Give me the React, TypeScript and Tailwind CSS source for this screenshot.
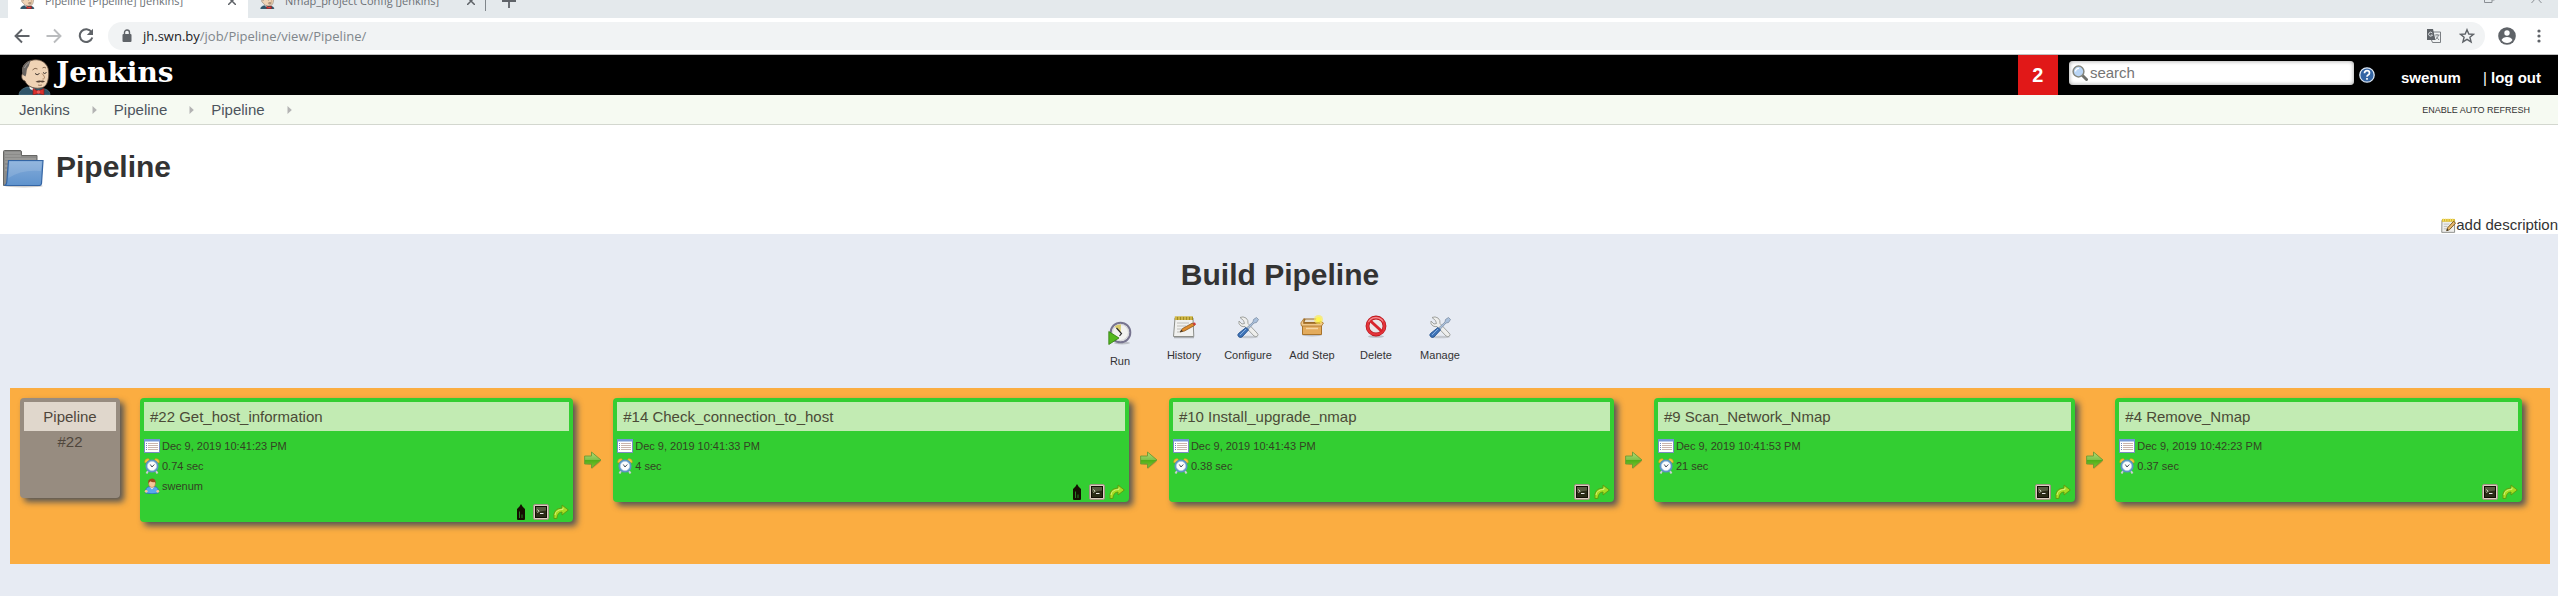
import React from "react";
import type { ReactNode } from "react";

type Build = {
  title: string;
  started: string;
  duration: string;
  user?: string;
  tag?: boolean;
  grow: string;
};

const builds: Build[] = [
  { title: "#22 Get_host_information", started: "Dec 9, 2019 10:41:23 PM", duration: "0.74 sec", user: "swenum", tag: true, grow: "grow-[433]" },
  { title: "#14 Check_connection_to_host", started: "Dec 9, 2019 10:41:33 PM", duration: "4 sec", tag: true, grow: "grow-[517]" },
  { title: "#10 Install_upgrade_nmap", started: "Dec 9, 2019 10:41:43 PM", duration: "0.38 sec", grow: "grow-[445]" },
  { title: "#9 Scan_Network_Nmap", started: "Dec 9, 2019 10:41:53 PM", duration: "21 sec", grow: "grow-[421]" },
  { title: "#4 Remove_Nmap", started: "Dec 9, 2019 10:42:23 PM", duration: "0.37 sec", grow: "grow-[406]" },
];

function Butler({ className }: { className: string }) {
  return (
    <svg viewBox="0 0 34 36" className={className} aria-hidden="true">
      <path d="M1 36C1 31.500 5 29.500 9 28L22 29C28 30 32 31 32 36Z" fill="#2f5468" stroke="#5d7f90" strokeWidth=".6" />
      <path d="M11 27L17 30L16 32L12 30Z" fill="#f4f4f4" />
      <path d="M5 14C3 8 7 3 13 1.500C21-1 28 3 30 9C31 13 31 17 30 21C29 26 26 29 22 29C15 30 9 27 7 22C3 21 3 16 5 14Z" fill="#efd3b5" stroke="#5a483a" strokeWidth=".8" />
      <path d="M4.500 15C3 8 6 3.500 13 1.500C11 4 12 6 9.500 9C8 12 9 14 7.500 17.500C5.500 16.500 5 16 4.500 15Z" fill="#6a6561" />
      <path d="M6.500 9C8 6 9 5 11 3.500" fill="none" stroke="#a5a19d" strokeWidth="1" />
      <path d="M14.500 11Q17 8 19.500 10M24.500 9Q26 7.500 28 9" fill="none" stroke="#7b5d46" strokeWidth=".9" />
      <path d="M17 14.500Q19 17 21.500 14.500M25 13.500Q26.500 15.500 28.500 13.500" fill="none" stroke="#3b322c" strokeWidth="1" />
      <path d="M24 14.500C27 17.500 27.500 20 24.500 20" fill="none" stroke="#a37c5c" strokeWidth=".9" />
      <path d="M17.500 22.800Q21 20.800 23 21.800Q25 21 27 22.500Q24.500 24 22.500 23Q20 24.300 17.500 22.800Z" fill="#5a4537" />
      <path d="M20 26Q22 26.800 24 26" fill="none" stroke="#8a6349" strokeWidth=".8" />
      <path d="M15 29.500L20 32L26 29.500V36L20.500 34.500L15 36Z" fill="#d8302d" stroke="#7c1715" strokeWidth=".6" />
      <circle cx="20.500" cy="33" r="1.700" fill="#ee5a57" />
    </svg>
  );
}

function FolderIcon() {
  return (
    <svg viewBox="0 0 44 40" className="h-10 w-11" aria-hidden="true">
      <defs>
        <linearGradient id="folderFront" x1="0" y1="0" x2="0" y2="1">
          <stop offset="0" stopColor="#85acd9" />
          <stop offset="1" stopColor="#5f93cd" />
        </linearGradient>
      </defs>
      <ellipse cx="24" cy="37" rx="19" ry="1.500" fill="#000" opacity=".2" />
      <path d="M3.500 36.500V2.500Q3.500 1.500 4.500 1.500H20Q21.500 1.500 21.500 3V6.500H37V34Z" fill="#8b8b89" stroke="#666664" />
      <path d="M5 4H20M5 7H21M5 10H36M5 13H10M5 17H8M5 21H7" stroke="#a8a8a6" />
      <path d="M8.500 11.500H43L41.500 34.500Q41.300 36.500 39.500 36.500H4.500Q6.500 36 6.800 33Z" fill="url(#folderFront)" stroke="#3465a4" strokeWidth="1.200" />
      <path d="M9.500 12.700H41.600L41 22Q22 20 8.500 29Z" fill="#fff" opacity=".13" />
    </svg>
  );
}

function NotepadIcon({ className }: { className: string }) {
  return (
    <svg viewBox="0 0 24 24" className={className} aria-hidden="true">
      <path d="M2 22.500H22" stroke="#000" opacity=".25" strokeWidth="1.500" />
      <path d="M3 3H21L21.800 21.500H1.500Z" fill="#f1f1ef" stroke="#8c8e89" />
      <path d="M2.800 1.500H21V5H2.800Z" fill="#a28c22" />
      <path d="M4 1V5M7 1V5M10 1V5M13 1V5M16 1V5M19 1V5" stroke="#e8cf5f" strokeWidth="1.200" />
      <path d="M5 8H17M5 11H14M5 14H10M5 17H9" stroke="#bdbdb9" />
      <path d="M8 17L10.500 13.500L20.500 8L22.500 10.500L12.500 16Z" fill="#e08c2c" stroke="#7b4a12" strokeWidth=".7" />
      <path d="M20.500 8L23 7.500L24 9.500L22.500 10.500Z" fill="#d13939" />
      <path d="M8 17L9.500 15L11 16.300Z" fill="#222" />
    </svg>
  );
}

function EditNoteIcon() {
  return (
    <svg viewBox="0 0 16 16" className="size-[15px]" aria-hidden="true">
      <path d="M1 2.500H14.500V15.300H.8Z" fill="#eeeeec" stroke="#7d7f7a" strokeWidth=".9" />
      <path d="M1 1H14.800V4H1Z" fill="#d9b92a" />
      <path d="M2.500 .5V3.500M5 .5V3.500M7.500 .5V3.500M10 .5V3.500M12.500 .5V3.500" stroke="#f8e889" strokeWidth=".9" />
      <path d="M3 6.500H9M3 9H7M3 11.500H6" stroke="#bdbdb9" />
      <path d="M6 13.500L7 10.500L13.500 3.500L15.500 5.500L9 12.500Z" fill="#e9b96e" stroke="#6b4a12" strokeWidth=".9" />
      <path d="M6 13.500L6.600 11.500L8 13Z" fill="#222" />
    </svg>
  );
}

function RunIcon() {
  return (
    <svg viewBox="0 0 24 24" className="size-6" aria-hidden="true">
      <ellipse cx="14" cy="22" rx="8" ry="1.500" opacity=".18" />
      <circle cx="12.500" cy="11.500" r="9.800" fill="#f2f2f0" stroke="#77748f" strokeWidth="2" />
      <circle cx="12.500" cy="11.500" r="8" fill="none" stroke="#c9c9cf" strokeWidth=".8" />
      <path d="M12.500 11.500L6.500 5.500Q9 3.500 13 3.600Z" fill="#d9cb6a" />
      <path d="M8.500 7L13.500 12.500L11.500 15" fill="none" stroke="#2a2a2a" strokeWidth="1.200" />
      <path d="M.8 10.500L11 17L.8 23.500Z" fill="#54b81f" stroke="#2f7d0c" strokeWidth=".8" />
    </svg>
  );
}

function ToolsIcon() {
  return (
    <svg viewBox="0 0 24 24" className="size-6" aria-hidden="true">
      <ellipse cx="12" cy="22" rx="10" ry="1.300" opacity=".15" />
      <path d="M4 2.500L7.500 5.500L8.500 8.500L6 9L3 6Q2 9 5 11Q7 12 9 11.500L18 21Q20 22.500 21.500 21Q22.800 19.500 21 18L12 8.500Q12.500 5 10 3Q7 1 4 2.500Z" fill="#eeeeec" stroke="#999b97" strokeWidth=".9" />
      <path d="M10.500 13L17 7L17.500 4.500L20.500 2.500L22.500 4.500L20.500 7.500L18 8L12 14.500Z" fill="#a9c0dc" stroke="#7e8ea3" strokeWidth=".8" />
      <path d="M10 12.500L12.500 15L6 22Q3.800 23 2.500 21.500Q1 20 2.500 18.500Z" fill="#3f74b8" stroke="#23508c" strokeWidth=".9" />
      <path d="M4 20L10 14" stroke="#8bb1df" strokeWidth="1" />
    </svg>
  );
}

function BoxIcon() {
  return (
    <svg viewBox="0 0 24 24" className="size-6" aria-hidden="true">
      <ellipse cx="12" cy="20" rx="10" ry="1.500" opacity=".18" />
      <path d="M4 3.500H19L22 9H2Z" fill="#9b6a29" />
      <path d="M5.500 4.500H18L19.500 7H4.500Z" fill="#e8e0d0" />
      <path d="M2.500 9.500H21.500V19.500H2.500Z" fill="#e3ab5c" stroke="#a8732b" />
      <path d="M4 3.500L.8 8L1.500 11H21.500L23.500 8L19 5.500L20 8.500H3.500Z" fill="#f0c88b" stroke="#a8732b" strokeWidth=".8" />
      <path d="M6 13.500H18" stroke="#f5d6a4" strokeWidth="1.500" />
      <circle cx="18.500" cy="4.500" r="4.500" fill="#fce94f" opacity=".65" />
      <circle cx="18.500" cy="4.500" r="2.500" fill="#fff64a" />
    </svg>
  );
}

function DeleteIcon() {
  return (
    <svg viewBox="0 0 24 24" className="size-6" aria-hidden="true">
      <ellipse cx="12" cy="21.500" rx="8" ry="1.300" opacity=".18" />
      <circle cx="12" cy="11" r="8.500" fill="#e9e5e8" stroke="#b31217" strokeWidth="3.800" />
      <circle cx="12" cy="11" r="8.500" fill="none" stroke="#e3333a" strokeWidth="2.500" />
      <path d="M6 5.500L18 16.500" stroke="#d8242b" strokeWidth="3" />
      <path d="M4.500 7A8.500 8.500 0 0 1 19 6.500" fill="none" stroke="#f08e92" strokeWidth="1.200" />
    </svg>
  );
}

function ListIcon() {
  return (
    <svg viewBox="0 0 16 16" className="size-4" aria-hidden="true">
      <path d="M.5 1.500H15.500V14.500H.5Z" fill="#fff" stroke="#7a8cc4" />
      <path d="M0 1H16V3.500H0Z" fill="#7397d6" />
      <path d="M4 5.500H14M4 7.500H14M4 9.500H14M4 11.500H14" stroke="#c9b5ad" />
      <path d="M2 5.500H3M2 7.500H3M2 9.500H3M2 11.500H3" stroke="#6c88c0" />
    </svg>
  );
}

function ClockIcon() {
  return (
    <svg viewBox="0 0 16 16" className="size-4" aria-hidden="true">
      <path d="M4 13L2.500 15.500M12 13L13.500 15.500" stroke="#c9cdd2" strokeWidth="2" />
      <path d="M.6 4.500Q.5 .8 4.500 .6L5.500 2L2 5Z" fill="#f5c43c" stroke="#b98a1c" strokeWidth=".5" />
      <path d="M15.400 4.500Q15.500 .8 11.500 .6L10.500 2L14 5Z" fill="#f5c43c" stroke="#b98a1c" strokeWidth=".5" />
      <circle cx="8" cy="8" r="5.600" fill="#fbfcfd" stroke="#5b93c4" strokeWidth="2" />
      <circle cx="8" cy="8" r="4.700" fill="none" stroke="#c6dbec" strokeWidth=".6" />
      <path d="M6.300 6.500L8 9L10.300 6.500" fill="none" stroke="#44505c" strokeWidth="1" />
    </svg>
  );
}

function UserIcon() {
  return (
    <svg viewBox="0 0 16 16" className="size-4" aria-hidden="true">
      <path d="M1.500 15Q1 9 6 8.500H10Q15 9 14.500 15Q8 16.500 1.500 15Z" fill="#58a8ee" stroke="#2d6fb7" strokeWidth=".8" />
      <path d="M6 9L8 11.500L10 9Z" fill="#eaf4fc" />
      <circle cx="2.200" cy="13.300" r="1.400" fill="#f3c79b" />
      <circle cx="13.800" cy="13.300" r="1.400" fill="#f3c79b" />
      <ellipse cx="8" cy="5.500" rx="3.400" ry="4" fill="#f5c79a" stroke="#a5612f" strokeWidth=".5" />
      <path d="M4.300 6V3Q5 .5 8.500 .5Q12 .8 11.700 6L11 4Q8 4.500 6.500 3.300Q5 4 4.300 6Z" fill="#9a4a1c" />
    </svg>
  );
}

function BottleIcon() {
  return (
    <svg viewBox="0 0 16 16" className="size-4" aria-hidden="true">
      <path d="M8 0L9.500 2.500L12 5V15Q12 16 11 16H5Q4 16 4 15V5L6.500 2.500Z" fill="#150f02" />
      <path d="M6.500 7.500V14M9 10.500V14" stroke="#2aa02a" strokeWidth=".8" />
    </svg>
  );
}

function ConsoleIcon() {
  return (
    <svg viewBox="0 0 16 16" className="size-4" aria-hidden="true">
      <rect x=".5" y=".5" width="15" height="15" rx="1.500" fill="#dccfbf" stroke="#a09483" />
      <rect x="2.500" y="2.500" width="11" height="11" fill="#2b2c16" stroke="#110e03" strokeWidth="1" />
      <path d="M3 3H13V6.500L3 8Z" fill="#575a40" />
      <path d="M4.500 5.500L6 7.200L4.500 8.800" fill="none" stroke="#dfe6c9" strokeWidth=".9" />
      <path d="M7 9.500H10.500" stroke="#fff" strokeWidth=".9" />
    </svg>
  );
}

function RerunIcon() {
  return (
    <svg viewBox="0 0 16 16" className="size-4" aria-hidden="true">
      <path d="M1 14.500Q-.5 4.500 9 4V1L15.300 6L9 11V8Q4.500 8 3.800 14.500Z" fill="#a5dd22" stroke="#5a9a10" strokeWidth=".9" />
      <path d="M2 11Q2.500 5.800 10 5.300V3.500" fill="none" stroke="#d6f37d" strokeWidth=".9" />
    </svg>
  );
}

function NextArrow() {
  return (
    <svg viewBox="0 0 18 18" className="size-[18px]" aria-hidden="true">
      <defs>
        <linearGradient id="nextFill" x1="0" y1="0" x2="0" y2="1">
          <stop offset="0" stopColor="#b5dc78" />
          <stop offset=".48" stopColor="#7fc24a" />
          <stop offset=".52" stopColor="#4fae1a" />
          <stop offset="1" stopColor="#7cc52f" />
        </linearGradient>
      </defs>
      <path d="M1 14H7L8 18L17.500 10Z" opacity=".15" />
      <path d="M.6 5H7.500V1L17 9L7.500 17V13H.6Z" fill="url(#nextFill)" stroke="#6b9a35" strokeWidth=".9" />
    </svg>
  );
}

function Tab({ title, active }: { title: string; active?: boolean }) {
  return (
    <div className={active ? "flex h-[34px] w-60 items-center gap-[10px] rounded-t-lg bg-white px-3" : "flex h-[34px] w-[238px] items-center gap-[10px] pl-3"}>
      <Butler className="h-4 w-[15px] shrink-0" />
      <span className="grow whitespace-nowrap text-[11px]/4 text-[#6b7075]">{title}</span>
      <button aria-label={"Close " + title} className="size-2">
        <svg viewBox="0 0 8 8" className="size-2"><path d="M0 0L8 8M8 0L0 8" stroke="#5f6368" strokeWidth="1.500" /></svg>
      </button>
      {!active && <div className="h-5 w-px bg-[#80868b]" />}
    </div>
  );
}

function BrowserChrome() {
  return (
    <div className="font-['Open_Sans','Noto_Sans',sans-serif]">
      <div className="flex h-[18px] items-end overflow-hidden bg-[#e4e9ec]">
        <div className="w-2 shrink-0" />
        <Tab title="Pipeline [Pipeline] [Jenkins]" active />
        <Tab title="Nmap_project Config [Jenkins]" />
        <button aria-label="New tab" className="ml-4 flex h-[34px] items-center">
          <svg viewBox="0 0 14 14" className="size-3.5"><path d="M7 0V14M0 7H14" stroke="#5f6368" strokeWidth="1.800" /></svg>
        </button>
        <div className="ml-auto flex h-8 items-start gap-9 pr-4">
          <button aria-label="Restore window">
            <svg viewBox="0 0 11 17" className="h-[17px] w-[11px]"><path d="M.5 9.500H8V16.500H.5ZM2.500 9V7H10.500V14H8" fill="none" stroke="#8a8f94" /></svg>
          </button>
          <button aria-label="Close window">
            <svg viewBox="0 0 11 17" className="h-[17px] w-[11px]"><path d="M.5 6L10.500 17M10.500 6L.5 17" stroke="#8a8f94" /></svg>
          </button>
        </div>
      </div>
      <div className="flex h-[37px] items-center border-b border-[#c0c0c0] bg-white pl-[14px] pr-[17px]">
        <button aria-label="Back" className="mr-4">
          <svg viewBox="0 0 16 16" className="size-4"><path d="M15.500 8H2M8 1.500L1.500 8L8 14.500" fill="none" stroke="#5f6368" strokeWidth="1.900" /></svg>
        </button>
        <button aria-label="Forward" className="mr-4">
          <svg viewBox="0 0 16 16" className="size-4"><path d="M.5 8H14M8 1.500L14.500 8L8 14.500" fill="none" stroke="#babcbe" strokeWidth="1.900" /></svg>
        </button>
        <button aria-label="Reload" className="mr-[14px]">
          <svg viewBox="0 0 16 16" className="size-4"><path d="M13.500 4A6.400 6.400 0 1 0 14.300 9.500" fill="none" stroke="#5f6368" strokeWidth="2" /><path d="M15 .8V7H8.800Z" fill="#5f6368" /></svg>
        </button>
        <div className="flex h-7 grow items-center rounded-full bg-[#f1f3f4] pl-[14px] pr-[10px]">
          <svg viewBox="0 0 10 14" className="mr-[11px] h-3.5 w-2.5" aria-hidden="true"><path d="M2.500 6V3.500a2.500 2.500 0 0 1 5 0V6" fill="none" stroke="#5f6368" strokeWidth="1.400" /><rect x="0.500" y="5" width="9" height="8" rx="1" fill="#5f6368" /></svg>
          <p className="grow text-[13px]/5 text-[#80868b]"><span className="text-[#202124]">jh.swn.by</span>/job/Pipeline/view/Pipeline/</p>
          <button aria-label="Translate this page" className="mr-[17px]">
            <svg viewBox="0 0 16 16" className="size-4">
              <path d="M7 4H14.500V14.500H6.500L5.500 12" fill="#f1f3f4" stroke="#7b7f83" />
              <path d="M1 1H7L9.500 12H1Z" fill="#5f6368" />
              <path d="M6.300 5A2 2 0 1 0 6.500 7H4.800" fill="none" stroke="#e8eaed" strokeWidth=".9" />
              <path d="M9 7H13.500M11 6V7M12.500 7Q12 10 9.500 11.500M10 8.500L13 12" fill="none" stroke="#7b7f83" strokeWidth=".9" />
            </svg>
          </button>
          <button aria-label="Bookmark this page">
            <svg viewBox="0 0 16 16" className="size-4"><path d="M8 1.700L9.800 6L14.500 6.300L10.900 9.300L12.100 13.900L8 11.300L3.900 13.900L5.100 9.300L1.500 6.300L6.200 6Z" fill="none" stroke="#5f6368" strokeWidth="1.400" /></svg>
          </button>
        </div>
        <button aria-label="Profile" className="ml-[13px] mr-[21px]">
          <svg viewBox="0 0 18 18" className="size-[18px]"><circle cx="9" cy="9" r="8.800" fill="#5f6368" /><circle cx="9" cy="6" r="2.700" fill="#fff" /><path d="M3.500 13Q5 10 9 10Q13 10 14.500 13Q12.500 16 9 16Q5.500 16 3.500 13Z" fill="#fff" /></svg>
        </button>
        <button aria-label="Browser menu">
          <svg viewBox="0 0 4 14" className="h-3.5 w-1"><circle cx="2" cy="2" r="1.600" fill="#5f6368" /><circle cx="2" cy="7" r="1.600" fill="#5f6368" /><circle cx="2" cy="12" r="1.600" fill="#5f6368" /></svg>
        </button>
      </div>
    </div>
  );
}

function JenkinsHeader() {
  return (
    <header className="flex h-10 items-center bg-black pr-[17px] text-white">
      <a href="#home" className="flex h-10 items-end gap-1 pl-[18px]">
        <Butler className="h-9 w-[34px]" />
        <span className="self-start font-['DejaVu_Serif',serif] text-[28px]/9 font-bold">Jenkins</span>
      </a>
      <a href="#alerts" className="ml-auto flex h-10 w-10 items-center justify-center bg-[#e11818] text-xl font-bold">2</a>
      <label className="mb-1 ml-[11px] flex h-6 w-[285px] items-center rounded bg-white pl-[3px] shadow-[inset_0_0_4px_#999]">
        <svg viewBox="0 0 16 16" className="mr-0.5 size-4 shrink-0" aria-hidden="true">
          <path d="M10 10L14.500 14.500" stroke="#6f716d" strokeWidth="3" strokeLinecap="round" />
          <circle cx="6.500" cy="6.500" r="5.400" fill="#b9d5f5" stroke="#85877f" strokeWidth="1.500" />
          <path d="M3.500 6.500A3 3 0 0 1 7 3.500" fill="none" stroke="#fff" strokeWidth="1.300" />
        </svg>
        <input aria-label="Search" placeholder="search" className="w-full min-w-0 bg-transparent text-[15px]/5 text-[#333] outline-none placeholder:text-[#757575]" />
      </label>
      <a href="#help" aria-label="Help" className="ml-[5px]">
        <svg viewBox="0 0 16 16" className="size-4">
          <circle cx="8" cy="8" r="7.200" fill="#3465a4" stroke="#dbe6f3" strokeWidth="1.300" />
          <path d="M5.500 6.200Q5.500 3.700 8 3.700Q10.500 3.700 10.500 6Q10.500 7.300 8.800 8.200Q8 8.700 8 9.800M8 11V12.800" fill="none" stroke="#fff" strokeWidth="1.700" />
        </svg>
      </a>
      <nav className="ml-[26px] flex gap-[22px] pt-1.5 text-[15px]/5 font-bold">
        <a href="#user">swenum</a>
        <span><span className="font-normal">|</span> <a href="#logout">log out</a></span>
      </nav>
    </header>
  );
}

function Crumb({ children }: { children: ReactNode }) {
  return (
    <li className="flex items-center">
      <a href="#crumb">{children}</a>
      <svg viewBox="0 0 5 8" className="ml-[22px] mr-[17px] h-2 w-[5px]" aria-hidden="true"><path d="M.5 0L4.800 4L.5 8Z" fill="#b3b3b3" /></svg>
    </li>
  );
}

function ToolButton({ label, icon, first }: { label: string; icon: ReactNode; first?: boolean }) {
  return (
    <button className={first ? "flex w-16 flex-col items-center gap-2 pt-1.5" : "flex w-16 flex-col items-center gap-2"}>
      {icon}
      <span className="whitespace-nowrap text-[11px]/4">{label}</span>
    </button>
  );
}

function InfoRow({ icon, children }: { icon: ReactNode; children: ReactNode }) {
  return (
    <div className="flex h-5 items-center gap-0.5 text-[11px]/4">
      {icon}
      <span>{children}</span>
    </div>
  );
}

function BuildCard({ build }: { build: Build }) {
  return (
    <article className={"min-w-0 basis-0 rounded-sm bg-[#33ce32] px-1 pb-0.5 pt-1 text-[#334223] shadow-[4px_4px_6px_#555] " + build.grow}>
      <h2 className="mb-[5px] truncate bg-[#c2ebb3] pl-1.5 text-[15px]/[29px] text-[#4b4a37]">{build.title}</h2>
      <InfoRow icon={<ListIcon />}>{build.started}</InfoRow>
      <InfoRow icon={<ClockIcon />}>{build.duration}</InfoRow>
      {build.user && <InfoRow icon={<UserIcon />}>{build.user}</InfoRow>}
      <div className="mt-2 flex justify-end gap-1">
        {build.tag && <button aria-label="Input"><BottleIcon /></button>}
        <button aria-label="Console output"><ConsoleIcon /></button>
        <button aria-label="Re-run"><RerunIcon /></button>
      </div>
    </article>
  );
}

export default function App() {
  return (
    <div className="flex min-h-screen flex-col bg-white font-['Liberation_Sans',Arial,sans-serif] text-[#333]">
      <BrowserChrome />
      <JenkinsHeader />
      <nav aria-label="Breadcrumb" className="flex items-center border-b border-[#d3d7cf] bg-[#f6faf2] pl-[19px] pr-7">
        <ol className="flex text-[15px]/[29px] text-[#4d545d]">
          <Crumb>Jenkins</Crumb>
          <Crumb>Pipeline</Crumb>
          <Crumb>Pipeline</Crumb>
        </ol>
        <a href="#refresh" className="ml-auto text-[9px]/4">ENABLE AUTO REFRESH</a>
      </nav>
      <div className="flex items-center gap-3 pt-6">
        <FolderIcon />
        <h1 className="pb-1 text-3xl/9 font-bold">Pipeline</h1>
      </div>
      <div className="mt-[27px] flex justify-end">
        <a href="#describe" className="flex h-[18px] items-center text-[15px]/[18px]">
          <EditNoteIcon />
          add description
        </a>
      </div>
      <main className="grow bg-[#e7ebf3] pb-8 pl-[10px] pr-2 pt-[23px]">
        <h1 className="text-center text-3xl/9 font-bold">Build Pipeline</h1>
        <div className="mt-[22px] flex items-start justify-center">
          <ToolButton label="Run" icon={<RunIcon />} first />
          <ToolButton label="History" icon={<NotepadIcon className="size-6" />} />
          <ToolButton label="Configure" icon={<ToolsIcon />} />
          <ToolButton label="Add Step" icon={<BoxIcon />} />
          <ToolButton label="Delete" icon={<DeleteIcon />} />
          <ToolButton label="Manage" icon={<ToolsIcon />} />
        </div>
        <section className="mt-[19px] flex items-start bg-[#fbad41] pb-[42px] pl-[10px] pr-7 pt-[10px]">
          <a href="#pipeline" className="mr-5 h-[100px] w-[100px] shrink-0 rounded-sm bg-[#978c80] p-1 text-center text-[15px]/[29px] text-[#4f463c] shadow-[4px_4px_6px_#555]">
            <span className="block bg-[#e0d7cc]">Pipeline</span>
            <span className="block leading-[22px]">#22</span>
          </a>
          {builds.map((build, i) => (
            <React.Fragment key={build.title}>
              {i > 0 && <div className="flex h-[124px] w-10 shrink-0 items-center justify-center"><NextArrow /></div>}
              <BuildCard build={build} />
            </React.Fragment>
          ))}
        </section>
      </main>
    </div>
  );
}
